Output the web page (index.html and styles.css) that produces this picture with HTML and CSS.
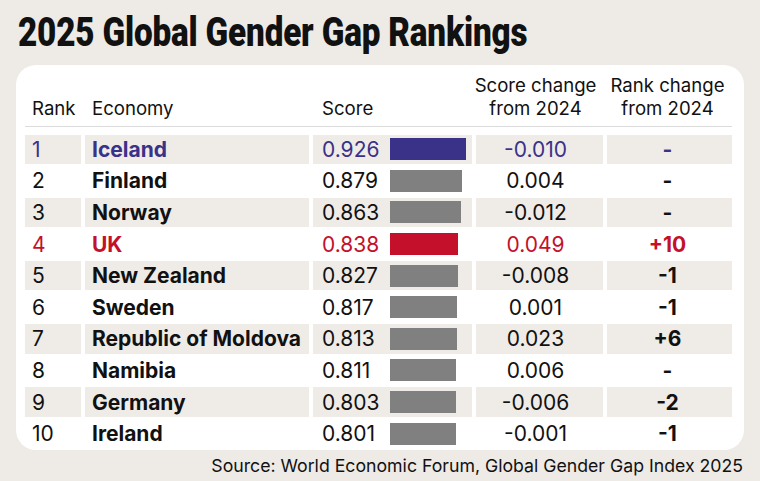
FILE: index.html
```html
<!DOCTYPE html>
<html lang="en">
<head>
<meta charset="utf-8">
<title>2025 Global Gender Gap Rankings</title>
<link rel="stylesheet" href="styles.css">
</head>
<body>
<h1 class="title"><span class="title-text">2025 Global Gender Gap Rankings</span></h1>
<div class="card">
  <div class="row head">
    <div class="c rank">Rank</div>
    <div class="c econ">Economy</div>
    <div class="c score">Score</div>
    <div class="c chg">Score change<br>from 2024</div>
    <div class="c rchg">Rank change<br>from 2024</div>
  </div>
  <div class="rows">
    <div class="row shaded blue">
      <div class="c rank">1</div><div class="c econ">Iceland</div>
      <div class="c score"><span class="num">0.926</span><span class="bar" style="width:76px"></span></div>
      <div class="c chg">-0.010</div><div class="c rchg">-</div>
    </div>
    <div class="row">
      <div class="c rank">2</div><div class="c econ">Finland</div>
      <div class="c score"><span class="num">0.879</span><span class="bar" style="width:72px"></span></div>
      <div class="c chg">0.004</div><div class="c rchg">-</div>
    </div>
    <div class="row shaded">
      <div class="c rank">3</div><div class="c econ">Norway</div>
      <div class="c score"><span class="num">0.863</span><span class="bar" style="width:71px"></span></div>
      <div class="c chg">-0.012</div><div class="c rchg">-</div>
    </div>
    <div class="row red">
      <div class="c rank">4</div><div class="c econ">UK</div>
      <div class="c score"><span class="num">0.838</span><span class="bar" style="width:68px"></span></div>
      <div class="c chg">0.049</div><div class="c rchg">+10</div>
    </div>
    <div class="row shaded">
      <div class="c rank">5</div><div class="c econ">New Zealand</div>
      <div class="c score"><span class="num">0.827</span><span class="bar" style="width:68px"></span></div>
      <div class="c chg">-0.008</div><div class="c rchg">-1</div>
    </div>
    <div class="row">
      <div class="c rank">6</div><div class="c econ">Sweden</div>
      <div class="c score"><span class="num">0.817</span><span class="bar" style="width:67px"></span></div>
      <div class="c chg">0.001</div><div class="c rchg">-1</div>
    </div>
    <div class="row shaded">
      <div class="c rank">7</div><div class="c econ">Republic of Moldova</div>
      <div class="c score"><span class="num">0.813</span><span class="bar" style="width:67px"></span></div>
      <div class="c chg">0.023</div><div class="c rchg">+6</div>
    </div>
    <div class="row">
      <div class="c rank">8</div><div class="c econ">Namibia</div>
      <div class="c score"><span class="num">0.811</span><span class="bar" style="width:66px"></span></div>
      <div class="c chg">0.006</div><div class="c rchg">-</div>
    </div>
    <div class="row shaded">
      <div class="c rank">9</div><div class="c econ">Germany</div>
      <div class="c score"><span class="num">0.803</span><span class="bar" style="width:66px"></span></div>
      <div class="c chg">-0.006</div><div class="c rchg">-2</div>
    </div>
    <div class="row">
      <div class="c rank">10</div><div class="c econ">Ireland</div>
      <div class="c score"><span class="num">0.801</span><span class="bar" style="width:66px"></span></div>
      <div class="c chg">-0.001</div><div class="c rchg">-1</div>
    </div>
  </div>
</div>
<p class="source">Source: World Economic Forum, Global Gender Gap Index 2025</p>
</body>
</html>
```
FILE: styles.css
```css
html, body {
  margin: 0;
  padding: 0;
}
body {
  width: 760px;
  height: 481px;
  background: #eeeae6;
  font-family: Inter, "Noto Sans", sans-serif;
  color: #111;
  overflow: hidden;
}
.title {
  margin: 0;
  padding: 12px 0 0 18px;
  height: 52px;
  box-sizing: border-box;
  font-family: Roboto, "DejaVu Sans", sans-serif;
  font-weight: 900;
  font-size: 40px;
  line-height: 42px;
  color: #111;
  white-space: nowrap;
}
.title-text {
  display: inline-block;
  transform: scaleX(0.831);
  transform-origin: left center;
  letter-spacing: -0.2px;
}
.card {
  margin: 13px 16px 0 16px;
  background: #fff;
  border-radius: 20px;
  padding: 8.5px 12px 6px 9px;
  height: 385px;
  box-sizing: border-box;
}
.row {
  display: grid;
  grid-template-columns: 56px 224px 159px 127px 125px;
  column-gap: 4px;
  height: 29.6px;
  align-items: stretch;
}
.rows {
  display: flex;
  flex-direction: column;
  gap: 2px;
  margin-top: 8px;
}
.c {
  display: flex;
  align-items: center;
  font-size: 21px;
  white-space: nowrap;
}
.rank { padding-left: 7px; }
.econ { padding-left: 7px; font-weight: 700; }
.score { padding-left: 9px; }
.num { width: 68px; flex: none; }
.chg, .rchg { justify-content: center; }
.chg { padding-right: 8px; }
.rchg { padding-right: 4px; font-weight: 700; }
.shaded .c { background: #efebe7; }
.bar {
  display: block;
  height: 22px;
  background: #808080;
}
.blue .c { color: #3a3189; }
.blue .bar { background: #3a3189; }
.red .c { color: #c4102b; }
.red .bar { background: #c4102b; }
.head {
  height: auto;
  align-items: end;
  border-bottom: 1.5px solid #dcdcdc;
  padding-bottom: 6px;
}
.head .c {
  font-size: 18.6px;
  font-weight: 400;
  line-height: 23px;
  background: none;
  text-align: center;
}
.source {
  margin: 5px 17px 0 0;
  text-align: right;
  font-size: 17.7px;
  color: #111;
}
```
